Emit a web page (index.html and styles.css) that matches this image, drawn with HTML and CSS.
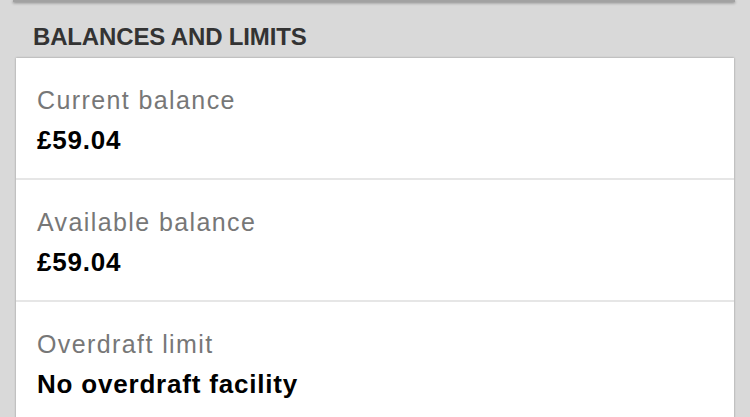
FILE: index.html
```html
<!DOCTYPE html>
<html lang="en">
<head>
  <meta charset="UTF-8">
  <title>Balances and limits</title>
  <link rel="stylesheet" href="styles.css">
</head>
<body>
  <!-- bottom edge of the card above -->
  <div class="prev-card"></div>

  <h2 class="section-title">BALANCES AND LIMITS</h2>

  <section class="card">
    <div class="row">
      <div class="label">Current balance</div>
      <div class="value">£59.04</div>
    </div>
    <div class="row">
      <div class="label">Available balance</div>
      <div class="value">£59.04</div>
    </div>
    <div class="row">
      <div class="label">Overdraft limit</div>
      <div class="value">No overdraft facility</div>
    </div>
  </section>
</body>
</html>
```

FILE: styles.css
```css
html, body {
  margin: 0;
  height: 100%;
  overflow: hidden;
}

body {
  font-family: "Liberation Sans", Arial, sans-serif;
  background: #d9d9d9;
}

.prev-card {
  height: 2px;
  margin: 0 15px 0 13px;
  background: #a2a2a2;
  box-shadow: 0 1px 3px rgba(0,0,0,0.45);
}

.section-title {
  margin: 0;
  padding: 20px 33px 6px;
  font-size: 24px;
  line-height: 30px;
  font-weight: bold;
  color: #333;
  letter-spacing: -0.15px;
}

.card {
  margin: 0 16px;
  background: white;
  box-shadow: 0 0 2px rgba(0,0,0,0.35);
}

.row {
  padding: 27px 21px 13px;
  border-bottom: 2px solid #e6e6e6;
}

.row:last-child { border-bottom: none; }

.label {
  font-size: 25px;
  line-height: 30px;
  color: #777;
  letter-spacing: 1.4px;
}

.value {
  font-size: 26px;
  line-height: 50px;
  font-weight: bold;
  color: #000;
  letter-spacing: 0.8px;
}
```
